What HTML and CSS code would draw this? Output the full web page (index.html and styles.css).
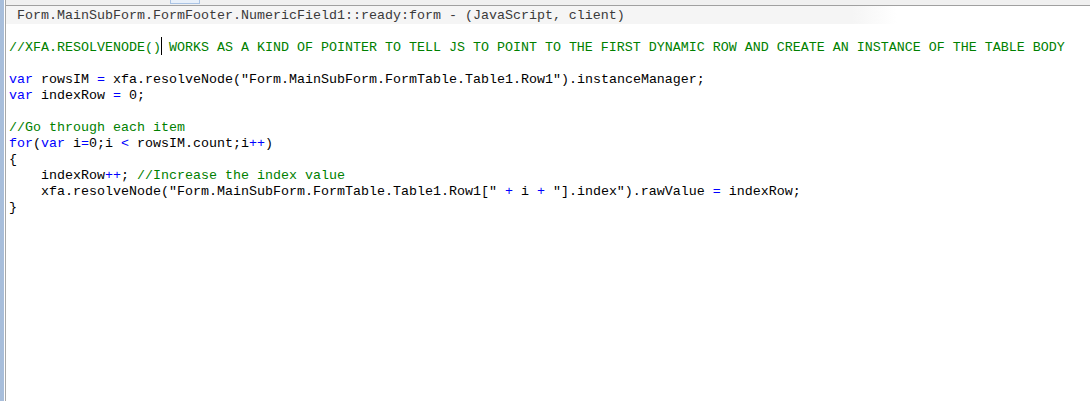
FILE: index.html
```html
<!DOCTYPE html>
<html lang="en">
<head>
    <meta charset="UTF-8">
    <title>Script Editor</title>
    <link rel="stylesheet" href="styles.css">
</head>
<body>
    <div class="gutter"></div>
    <div class="main">
        <div class="topbar"><span class="tab"></span></div>
        <div class="header">Form.MainSubForm.FormFooter.NumericField1::ready:form - (JavaScript, client)</div>
        <pre class="code"><span class="cm">//XFA.RESOLVENODE()<span class="caret"></span> WORKS AS A KIND OF POINTER TO TELL JS TO POINT TO THE FIRST DYNAMIC ROW AND CREATE AN INSTANCE OF THE TABLE BODY</span>

<span class="kw">var</span> rowsIM <span class="op">=</span> xfa.resolveNode("Form.MainSubForm.FormTable.Table1.Row1").instanceManager;
<span class="kw">var</span> indexRow <span class="op">=</span> 0;

<span class="cm">//Go through each item</span>
<span class="kw">for</span>(<span class="kw">var</span> i<span class="op">=</span>0;i <span class="op">&lt;</span> rowsIM.count;i<span class="op">++</span>)
{
    indexRow<span class="op">++</span>; <span class="cm">//Increase the index value</span>
    xfa.resolveNode("Form.MainSubForm.FormTable.Table1.Row1[" <span class="op">+</span> i <span class="op">+</span> "].index").rawValue <span class="op">=</span> indexRow;
}</pre>
    </div>
</body>
</html>
```

FILE: styles.css
```css
body {
    margin: 0;
    height: 401px;
    display: flex;
    background: #fff;
    overflow: hidden;
}
.gutter {
    width: 4px;
    background-color: #a8bedb;
    border-right: 1px solid #fff;
}
.main {
    flex: 1;
    border-left: 1px solid #a8a8a8;
    display: flex;
    flex-direction: column;
}
.topbar {
    height: 5px;
    background-color: #f0f0f0;
    border-bottom: 1px solid #a0a0a0;
    position: relative;
}
.tab {
    position: absolute;
    left: 164px;
    top: 0;
    width: 28px;
    height: 3px;
    border: 1px solid #a9c3e4;
    border-top: none;
    background-color: #e8f0fa;
}
.header {
    font-family: "Liberation Mono", monospace;
    font-size: 13.33px;
    line-height: 16px;
    color: #3a3a3a;
    padding: 2px 0 0 11px;
    height: 16px;
    width: 880px;
    background: linear-gradient(to right, #f5f5f5 95%, #fff);
}
.code {
    margin: 0;
    padding: 13px 0 0 3px;
    font-family: "Liberation Mono", monospace;
    font-size: 13.33px;
    line-height: 16px;
    color: #000;
}
.kw {
    color: #0000ff;
}
.op {
    color: #0000ff;
}
.cm {
    color: #008000;
}
.caret {
    display: inline-block;
    width: 1px;
    height: 18px;
    margin: 0 -1px -4px 0;
    background-color: #000;
}
```
